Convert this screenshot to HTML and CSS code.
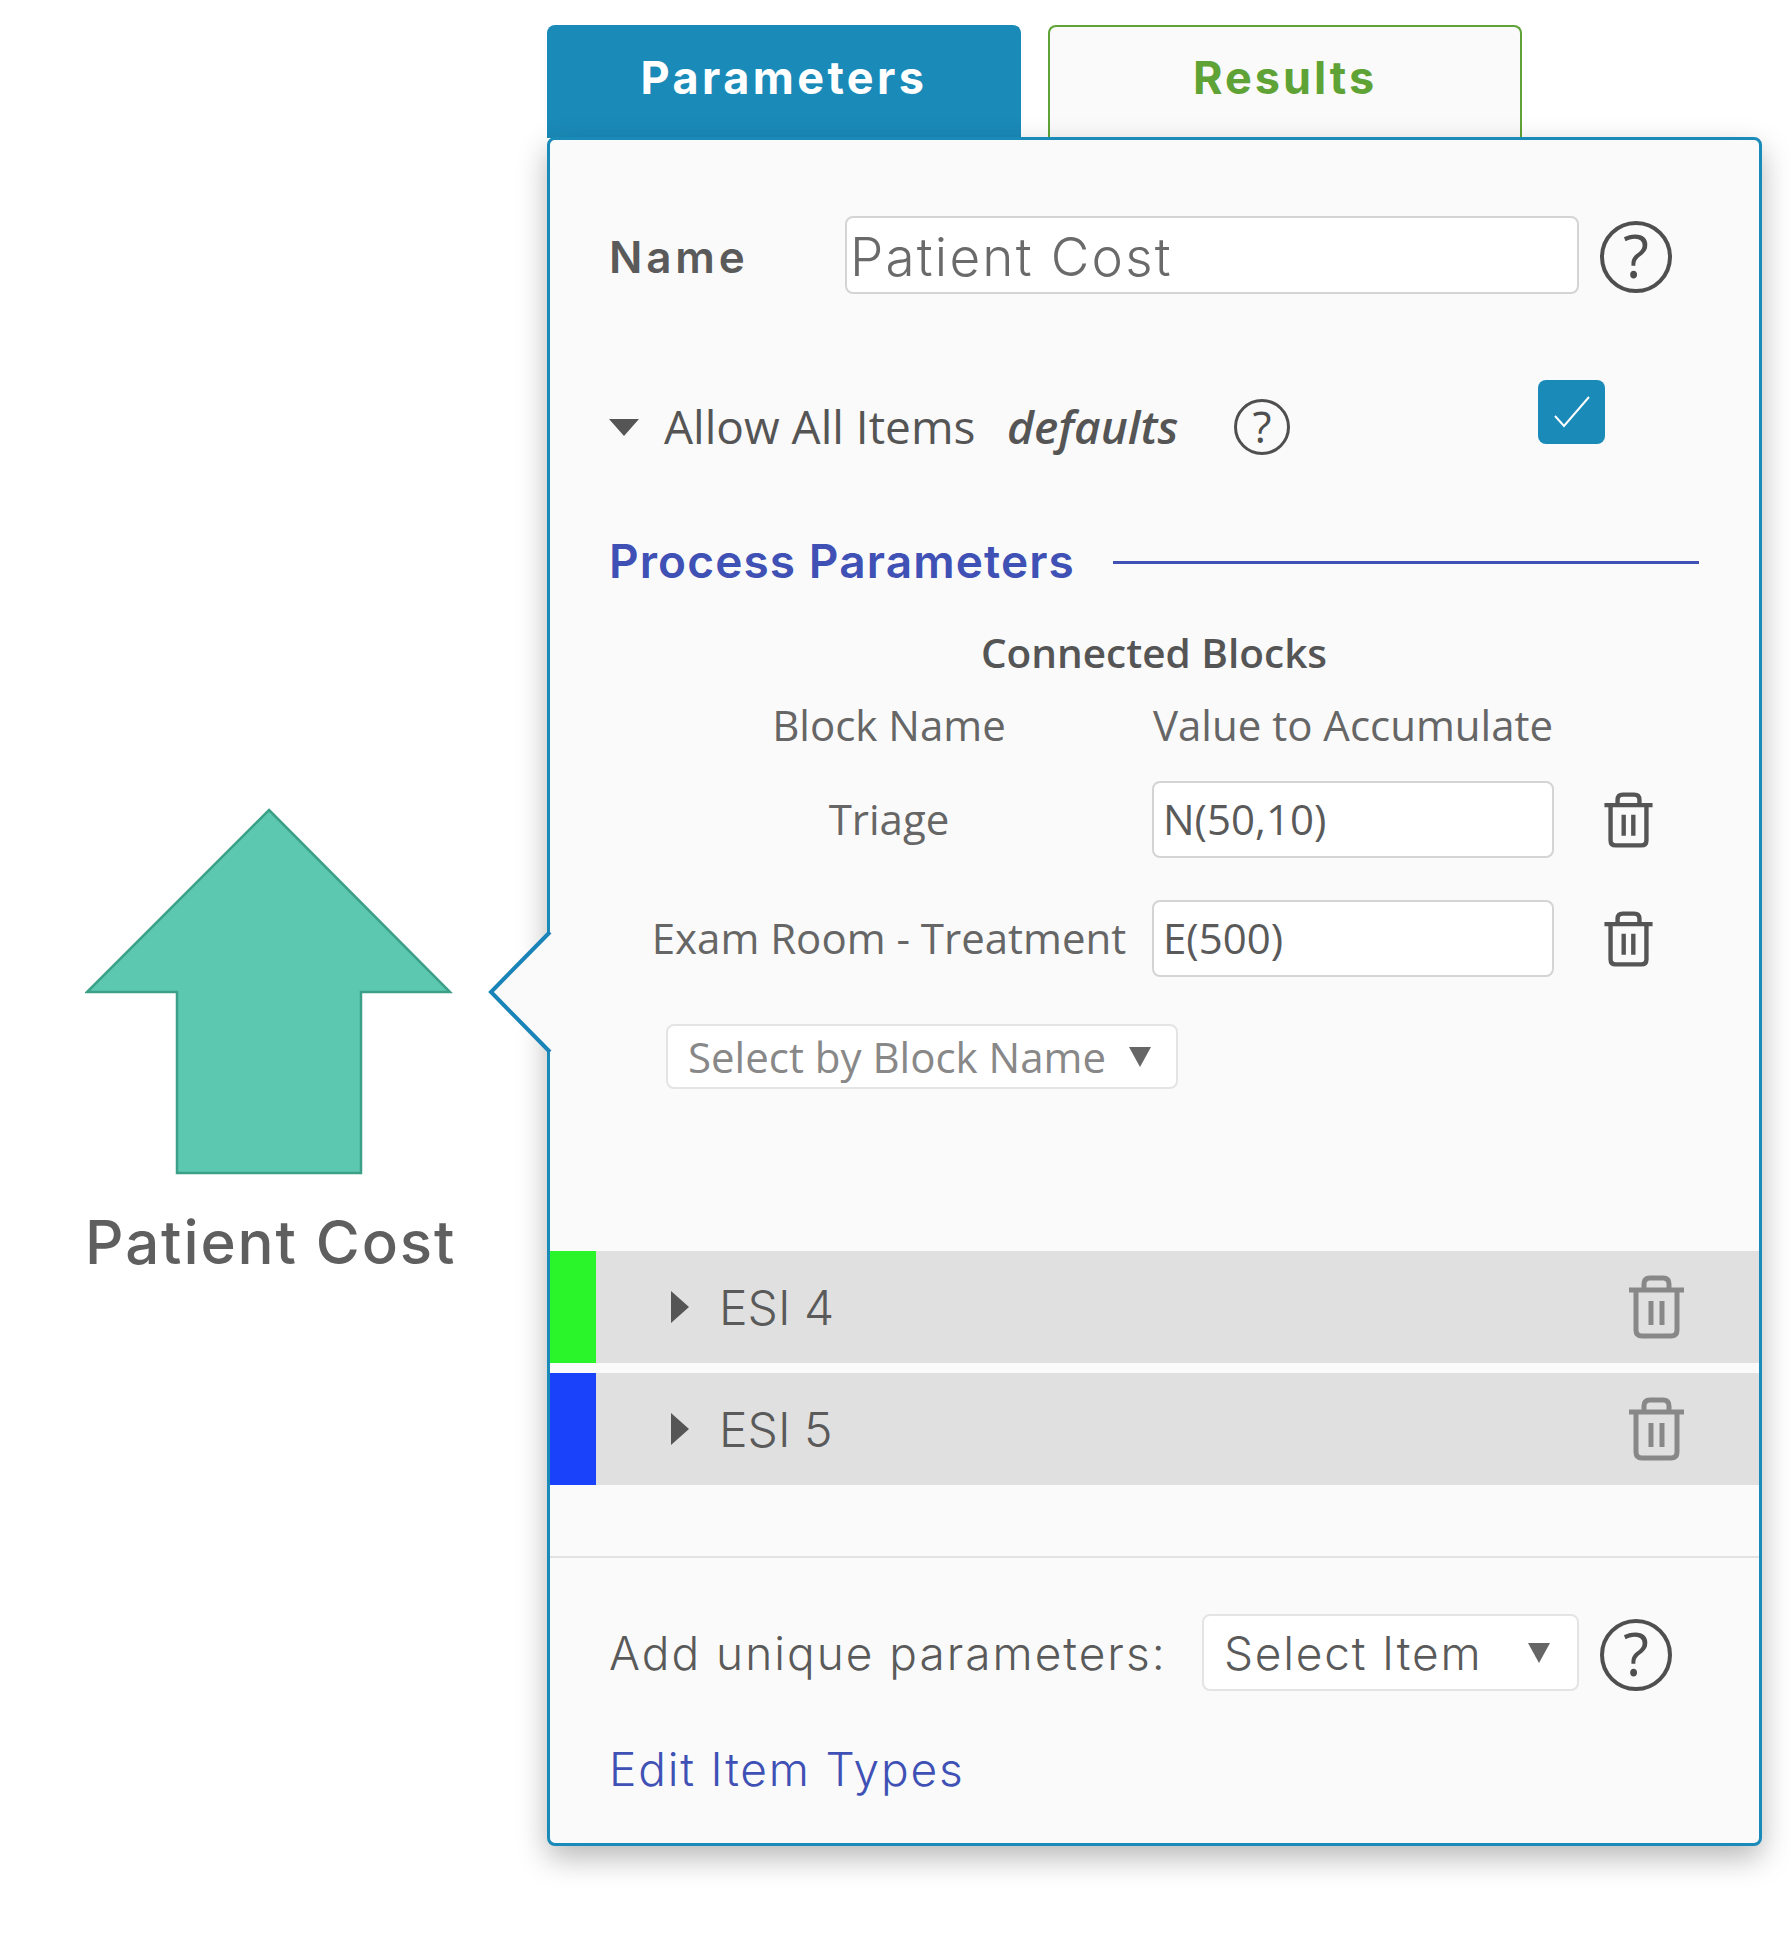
FILE: index.html
```html
<!DOCTYPE html>
<html lang="en">
<head>
    <meta charset="UTF-8">
    <title>Patient Cost</title>
    <link rel="stylesheet" href="styles.css">
</head>
<body>
    <svg class="defs" width="0" height="0">
        <symbol id="trash" viewBox="0 0 55 64">
            <path d="M0 15H55M15 15V9Q15 3 21 3H34Q40 3 40 9V15M7 15V55Q7 61 13 61H42Q48 61 48 55V15M22 26V50M33 26V50" fill="none" stroke="currentColor" stroke-width="5"/>
        </symbol>
    </svg>

    <div class="canvas">
        <div class="block">
            <svg class="block__shape" width="370" height="368" viewBox="0 0 370 368">
                <polygon points="184,2 365,184 276,184 276,365 92,365 92,184 2,184" fill="#5cc8b0" stroke="#3c9f88" stroke-width="2.500"/>
            </svg>
            <div class="block__label">Patient Cost</div>
        </div>

        <div class="editor">
            <div class="tabs">
                <div class="tab tab--active">Parameters</div>
                <div class="tab">Results</div>
            </div>

            <div class="panel">
                <svg class="panel__notch" width="64" height="124" viewBox="0 0 64 124">
                    <polygon points="62,2 3,62 62,122" fill="#fafafa"/>
                    <polyline points="62,2 3,62 62,122" fill="none" stroke="#1a84b8" stroke-width="4"/>
                </svg>

                <div class="section">
                    <div class="name-row">
                        <div class="name-row__label">Name</div>
                        <div class="field field--name">Patient Cost</div>
                        <div class="help">?</div>
                    </div>

                    <div class="allow-row">
                        <div class="caret-down"></div>
                        <div class="allow-row__title">Allow All Items</div>
                        <div class="allow-row__defaults">defaults</div>
                        <div class="help help--small">?</div>
                        <div class="checkbox">
                            <svg width="38" height="34" viewBox="0 0 38 34"><polyline points="2,21 11,31 36,2" fill="none" stroke="#fff" stroke-width="2"/></svg>
                        </div>
                    </div>

                    <div class="heading">
                        <div class="heading__text">Process Parameters</div>
                        <div class="heading__line"></div>
                    </div>

                    <div class="connected">Connected Blocks</div>

                    <div class="blocks-head">
                        <div class="blocks-name">Block Name</div>
                        <div class="blocks-value">Value to Accumulate</div>
                    </div>

                    <div class="blocks-row">
                        <div class="blocks-name">Triage</div>
                        <div class="field field--value">N(50,10)</div>
                        <svg class="trash"><use href="#trash"/></svg>
                    </div>

                    <div class="blocks-row">
                        <div class="blocks-name">Exam Room - Treatment</div>
                        <div class="field field--value">E(500)</div>
                        <svg class="trash"><use href="#trash"/></svg>
                    </div>

                    <div class="select select--block">
                        <span>Select by Block Name</span>
                        <span class="select__arrow"></span>
                    </div>
                </div>

                <div class="items">
                    <div class="item">
                        <div class="item__color item__color--green"></div>
                        <div class="caret-right"></div>
                        <div class="item__name">ESI 4</div>
                        <svg class="trash trash--item"><use href="#trash"/></svg>
                    </div>
                    <div class="item">
                        <div class="item__color item__color--blue"></div>
                        <div class="caret-right"></div>
                        <div class="item__name">ESI 5</div>
                        <svg class="trash trash--item"><use href="#trash"/></svg>
                    </div>
                </div>

                <div class="footer">
                    <div class="add-row">
                        <div class="add-row__label">Add unique parameters:</div>
                        <div class="select select--item">
                            <span>Select Item</span>
                            <span class="select__arrow"></span>
                        </div>
                        <div class="help">?</div>
                    </div>
                    <div class="edit-link">Edit Item Types</div>
                </div>
            </div>
        </div>
    </div>
</body>
</html>
```

FILE: styles.css
```css
html {
    height: 100%;
}

body {
    margin: 0;
    min-height: 1940px;
    background: #fff;
    color: #5a5a5a;
    font-family: "Open Sans", sans-serif;
    overflow: hidden;
}

.defs {
    display: block;
    height: 0;
}

.canvas {
    display: flex;
    padding: 25px 0 0 85px;
}

.block {
    width: 462px;
    padding-top: 783px;
}

.block__shape {
    display: block;
}

.block__label {
    margin-top: 31px;
    font-family: Inter, sans-serif;
    font-size: 60px;
    font-weight: 500;
    line-height: 70px;
    letter-spacing: 1.900px;
    color: #5f5f5f;
    white-space: nowrap;
}

.editor {
    width: 1215px;
}

.tabs {
    display: flex;
    gap: 27px;
    height: 113px;
    margin-bottom: -1px;
}

.tab {
    box-sizing: border-box;
    width: 474px;
    height: 113px;
    padding-top: 24px;
    background: #fafafa;
    border: 2px solid #5fa336;
    border-bottom: 0;
    border-radius: 8px 8px 0 0;
    color: #5fa336;
    font-family: Inter, sans-serif;
    font-size: 45px;
    font-weight: 700;
    line-height: 54px;
    letter-spacing: 3px;
    text-align: center;
}

.tab--active {
    background: #1a8ab8;
    border-color: #1a8ab8;
    color: #fff;
    letter-spacing: 3.400px;
}

.panel {
    position: relative;
    box-sizing: border-box;
    padding-bottom: 49px;
    background: #fafafa;
    border: 3px solid #1a8ab8;
    border-radius: 8px;
    box-shadow: 0 12px 30px rgba(0, 0, 0, 0.28);
}

.panel__notch {
    position: absolute;
    top: 790px;
    left: -62px;
}

.section {
    padding: 76px 60px 0 59px;
}

.name-row {
    display: flex;
    align-items: center;
    height: 78px;
}

.name-row__label {
    width: 236px;
    margin-top: 4px;
    font-family: Inter, sans-serif;
    font-size: 44px;
    font-weight: 600;
    letter-spacing: 3.800px;
}

.field {
    box-sizing: border-box;
    background: #fff;
    border: 2px solid #d4d4d4;
    border-radius: 8px;
}

.field--name {
    width: 734px;
    height: 78px;
    padding-left: 3px;
    font-family: Inter, sans-serif;
    font-size: 53px;
    font-weight: 300;
    line-height: 78px;
    letter-spacing: 2.200px;
    color: #6a6a6a;
}

.help {
    box-sizing: border-box;
    width: 72px;
    height: 72px;
    margin: 4px 0 0 21px;
    border: 4px solid #4f4f4f;
    border-radius: 50%;
    color: #4f4f4f;
    font-size: 60px;
    font-weight: 500;
    line-height: 60px;
    text-align: center;
}

.allow-row {
    display: flex;
    align-items: center;
    height: 96px;
    margin-top: 85px;
    font-size: 46px;
    color: #555;
}

.caret-down {
    width: 0;
    height: 0;
    margin-right: 25px;
    border-top: 17px solid #555;
    border-left: 15px solid transparent;
    border-right: 15px solid transparent;
}

.allow-row__title {
    width: 343px;
    margin-top: -2px;
    white-space: nowrap;
}

.allow-row__defaults {
    width: 227px;
    margin-top: -2px;
    font-style: italic;
    font-weight: 600;
}

.help--small {
    width: 56px;
    height: 56px;
    margin: 0;
    border-width: 3px;
    font-size: 44px;
    line-height: 48px;
}

.checkbox {
    box-sizing: border-box;
    display: flex;
    align-items: center;
    justify-content: center;
    align-self: flex-start;
    width: 67px;
    height: 64px;
    margin: 1px 0 0 248px;
    background: #1a8ab8;
    border-radius: 8px;
}

.heading {
    display: flex;
    align-items: center;
    gap: 38px;
    height: 50px;
    margin-top: 61px;
}

.heading__text {
    font-family: Inter, sans-serif;
    font-size: 46px;
    font-weight: 600;
    letter-spacing: 1.100px;
    color: #3f51b5;
    white-space: nowrap;
}

.heading__line {
    width: 591px;
    height: 3px;
    margin-top: 3px;
    background: #3f51b5;
}

.connected {
    height: 50px;
    margin-top: 42px;
    font-size: 40.500px;
    font-weight: 600;
    line-height: 50px;
    text-align: center;
    color: #555;
}

.blocks-head,
.blocks-row {
    display: flex;
    align-items: center;
    font-size: 42px;
    color: #666;
}

.blocks-head {
    height: 50px;
    margin-top: 21px;
    margin-bottom: -10px;
}

.blocks-row {
    margin-top: 42px;
}

.blocks-name {
    box-sizing: border-box;
    width: 543px;
    padding-left: 17px;
    text-align: center;
    white-space: nowrap;
}

.blocks-row .blocks-name {
    margin-top: -2px;
}

.blocks-value {
    width: 402px;
    text-align: center;
    white-space: nowrap;
}

.field--value {
    width: 402px;
    height: 77px;
    padding-left: 9px;
    line-height: 71px;
    color: #5a5a5a;
}

.trash {
    width: 49px;
    height: 56px;
    margin-left: 50px;
    color: #555;
}

.select {
    box-sizing: border-box;
    display: flex;
    align-items: center;
    justify-content: space-between;
    background: #fff;
    border: 2px solid #e4e4e4;
    border-radius: 8px;
}

.select--block {
    width: 512px;
    height: 65px;
    margin: 47px 0 0 57px;
    padding: 0 25px 0 20px;
    font-size: 42px;
    color: #888;
}

.select__arrow {
    width: 0;
    height: 0;
    border-top: 20px solid #666;
    border-left: 11px solid transparent;
    border-right: 11px solid transparent;
}

.items {
    display: flex;
    flex-direction: column;
    gap: 10px;
    margin-top: 162px;
}

.item {
    display: flex;
    align-items: center;
    height: 112px;
    background: #e0e0e0;
}

.item__color {
    width: 46px;
    height: 100%;
}

.item__color--green {
    background: #2af52a;
}

.item__color--blue {
    background: #1a42fa;
}

.caret-right {
    width: 0;
    height: 0;
    margin-left: 75px;
    border-left: 18px solid #555;
    border-top: 16px solid transparent;
    border-bottom: 16px solid transparent;
}

.item__name {
    flex: 1;
    margin-left: 30px;
    font-family: Inter, sans-serif;
    font-size: 48px;
    font-weight: 300;
    color: #5a5a5a;
}

.trash--item {
    width: 55px;
    height: 64px;
    margin: 0 75px 0 0;
    color: #888;
}

.footer {
    margin-top: 71px;
    padding: 56px 60px 0 59px;
    border-top: 2px solid #e2e2e2;
}

.add-row {
    display: flex;
    align-items: center;
    height: 77px;
}

.add-row__label {
    width: 593px;
    font-family: Inter, sans-serif;
    font-size: 46px;
    font-weight: 300;
    letter-spacing: 2px;
    color: #5a5a5a;
    white-space: nowrap;
}

.select--item {
    width: 377px;
    height: 77px;
    padding: 0 27px 0 20px;
    font-family: Inter, sans-serif;
    font-size: 46px;
    font-weight: 300;
    letter-spacing: 1.800px;
    color: #5a5a5a;
}

.edit-link {
    height: 50px;
    margin-top: 53px;
    font-family: Inter, sans-serif;
    font-size: 46px;
    font-weight: 300;
    line-height: 50px;
    letter-spacing: 1.800px;
    color: #3f51b5;
}
```
